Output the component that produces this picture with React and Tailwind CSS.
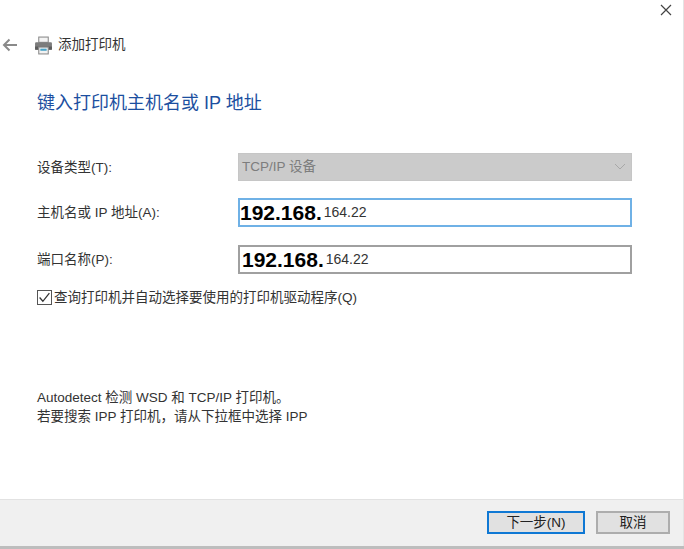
const cjk = { fontFamily: '"Liberation Sans", "Noto Sans CJK SC", sans-serif' };

function PrinterIcon() {
  return (
    <svg width="19" height="19" viewBox="0 0 18 18" className="shrink-0">
      <rect x="4.5" y="1" width="9" height="5" fill="#f4f4f4" stroke="#8a8a8a" />
      <rect x="1" y="6" width="16" height="7" rx="1" fill="#7c7c7c" />
      <rect x="1" y="10" width="16" height="3" fill="#5c5c5c" />
      <rect x="4.5" y="10.5" width="9" height="6.5" fill="#f2f2f2" stroke="#8a8a8a" />
      <rect x="6" y="12" width="6" height="2" fill="#4aa3c7" />
    </svg>
  );
}

function Row({ label, children, className }) {
  return (
    <div className={`flex items-center ${className}`}>
      <div className="w-[238px] text-[13.5px] text-[#333] pl-[37px] pt-[2px] shrink-0">{label}</div>
      {children}
    </div>
  );
}

function IpField({ focused, pad }) {
  return (
    <div
      className={`w-[394px] h-[29px] bg-white border-2 flex items-center ${pad} ${
        focused ? "border-[#6fb1e6]" : "border-[#a0a0a0]"
      }`}
    >
      <span className="text-[21px] font-bold text-black leading-none">192.168.</span>
      <span className="text-[14px] text-[#333] leading-none ml-[2px] -mt-[2px]">164.22</span>
    </div>
  );
}

export default function App() {
  return (
    <div className="w-[684px] h-[549px] bg-white flex flex-col overflow-hidden" style={cjk}>
      <div className="w-[684px] h-[546px] flex flex-col border-r border-[#e4e4e4]">
        <div className="h-[20px] flex justify-end pr-[11px] pt-[4px] shrink-0">
          <svg width="12" height="12" viewBox="0 0 12 12">
            <path d="M1 1 L11 11 M11 1 L1 11" stroke="#444" strokeWidth="1.2" fill="none" />
          </svg>
        </div>

        <div className="flex items-center h-[18px] mt-[16px] shrink-0">
          <svg width="16" height="14" viewBox="0 0 16 14" className="ml-[2px]">
            <path d="M15 7 H2 M7.5 1.5 L2 7 L7.5 12.5" stroke="#8a8a8a" strokeWidth="2" fill="none" />
          </svg>
          <div className="ml-[16px]">
            <PrinterIcon />
          </div>
          <span className="ml-[5px] text-[13.5px] text-[#333]">添加打印机</span>
        </div>

        <h1 className="mt-[37px] ml-[37px] text-[18px] leading-[24px] font-normal text-[#1c4fa0] shrink-0">
          键入打印机主机名或 IP 地址
        </h1>

        <Row label="设备类型(T):" className="mt-[38px]">
          <div className="w-[394px] h-[28px] bg-[#cbcbcb] border border-[#c6c6c6] flex items-center justify-between pl-[3px] pr-[5px]">
            <span className="text-[13.5px] text-[#7d7d7d]">TCP/IP 设备</span>
            <svg width="12" height="8" viewBox="0 0 12 8">
              <path d="M1 1 L6 6 L11 1" stroke="#a8a8a8" strokeWidth="1" fill="none" />
            </svg>
          </div>
        </Row>
        <Row label="主机名或 IP 地址(A):" className="mt-[17px]">
          <IpField focused pad="pl-[0px]" />
        </Row>
        <Row label="端口名称(P):" className="mt-[18px]">
          <IpField pad="pl-[2px]" />
        </Row>

        <label className="flex items-center mt-[16px] ml-[37px]">
          <span className="w-[15px] h-[15px] border border-[#555] bg-white flex items-center justify-center shrink-0">
            <svg width="13" height="13" viewBox="0 0 12 12">
              <path d="M1.5 6 L4.5 9.5 L10.5 2" stroke="#333" strokeWidth="1.2" fill="none" />
            </svg>
          </span>
          <span className="ml-[2px] text-[13.5px] leading-[15px] text-[#333]">查询打印机并自动选择要使用的打印机驱动程序(Q)</span>
        </label>

        <div className="mt-[83px] ml-[37px] text-[13.5px] leading-[19px] text-[#333]">
          <div>Autodetect 检测 WSD 和 TCP/IP 打印机。</div>
          <div>若要搜索 IPP 打印机，请从下拉框中选择 IPP</div>
        </div>

        <div className="mt-auto h-[47px] bg-[#f0f0f0] border-t border-[#e2e2e2] flex items-start pt-[11px] justify-end gap-[11px] pr-[13px] shrink-0">
          <button className="w-[98px] h-[23px] bg-[#e1e1e1] border-2 border-[#0f78d4] text-[13.5px] leading-none text-[#222]">
            下一步(N)
          </button>
          <button className="w-[74px] h-[23px] bg-[#e1e1e1] border-2 border-[#adadad] text-[13.5px] leading-none text-[#222]">
            取消
          </button>
        </div>
      </div>
      <div className="h-[3px] bg-[#bdbdbd]" />
    </div>
  );
}
